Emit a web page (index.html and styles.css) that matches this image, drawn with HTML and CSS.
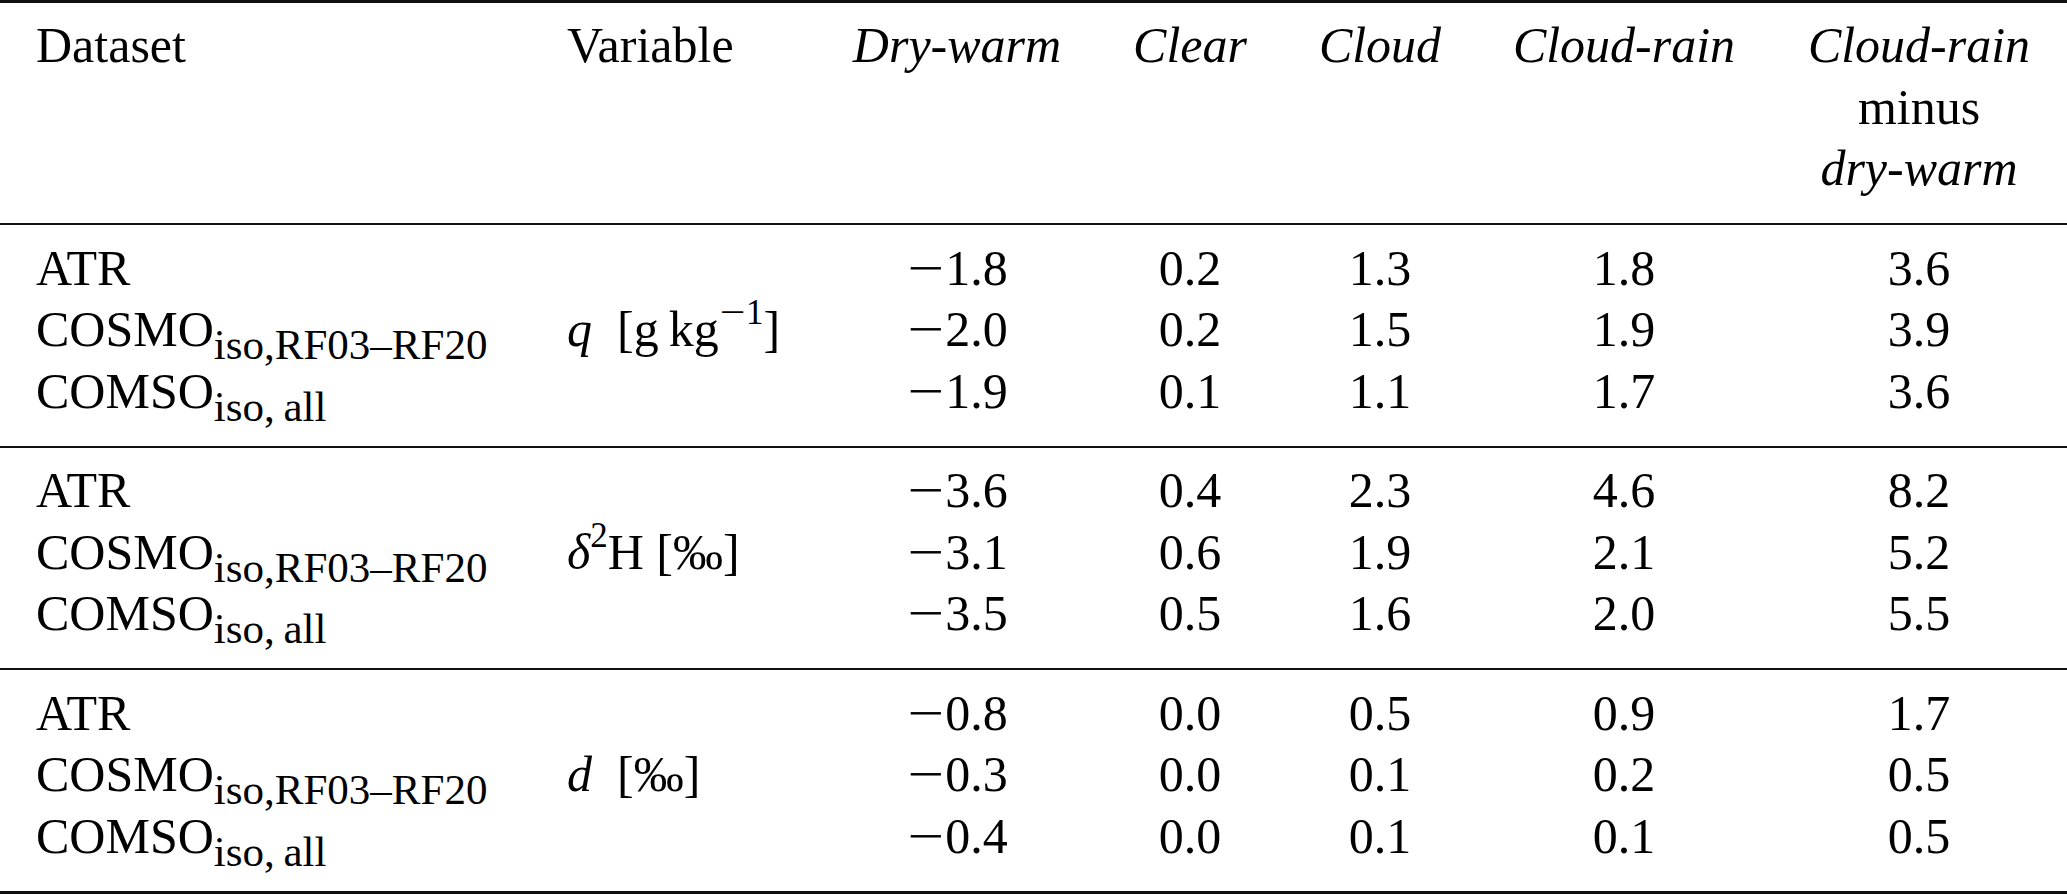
FILE: index.html
```html
<!DOCTYPE html>
<html lang="en">
<head>
<meta charset="utf-8">
<title>Table</title>
<link rel="stylesheet" href="styles.css">
</head>
<body>
<div class="tbl">
  <div class="grp head">
    <div>Dataset</div>
    <div>Variable</div>
    <div class="c it">Dry-warm</div>
    <div class="c it">Clear</div>
    <div class="c it">Cloud</div>
    <div class="c it">Cloud-rain</div>
    <div class="c"><span class="it">Cloud-rain</span><br>minus<br><span class="it">dry-warm</span></div>
  </div>

  <div class="grp">
    <div>ATR</div><div></div>
    <div class="c"><span class="mi">−</span>1.8</div><div class="c">0.2</div><div class="c">1.3</div><div class="c">1.8</div><div class="c">3.6</div>
    <div>COSMO<span class="sb">iso,RF03–RF20</span></div>
    <div><span class="it">q</span>&ensp;[g&thinsp;kg<span class="sp"><span class="mi">−</span>1</span>]</div>
    <div class="c"><span class="mi">−</span>2.0</div><div class="c">0.2</div><div class="c">1.5</div><div class="c">1.9</div><div class="c">3.9</div>
    <div>COMSO<span class="sb">iso,&thinsp;all</span></div><div></div>
    <div class="c"><span class="mi">−</span>1.9</div><div class="c">0.1</div><div class="c">1.1</div><div class="c">1.7</div><div class="c">3.6</div>
  </div>

  <div class="grp">
    <div>ATR</div><div></div>
    <div class="c"><span class="mi">−</span>3.6</div><div class="c">0.4</div><div class="c">2.3</div><div class="c">4.6</div><div class="c">8.2</div>
    <div>COSMO<span class="sb">iso,RF03–RF20</span></div>
    <div><span class="it">δ</span><span class="sp">2</span>H [‰]</div>
    <div class="c"><span class="mi">−</span>3.1</div><div class="c">0.6</div><div class="c">1.9</div><div class="c">2.1</div><div class="c">5.2</div>
    <div>COMSO<span class="sb">iso,&thinsp;all</span></div><div></div>
    <div class="c"><span class="mi">−</span>3.5</div><div class="c">0.5</div><div class="c">1.6</div><div class="c">2.0</div><div class="c">5.5</div>
  </div>

  <div class="grp">
    <div>ATR</div><div></div>
    <div class="c"><span class="mi">−</span>0.8</div><div class="c">0.0</div><div class="c">0.5</div><div class="c">0.9</div><div class="c">1.7</div>
    <div>COSMO<span class="sb">iso,RF03–RF20</span></div>
    <div><span class="it">d</span>&ensp;[‰]</div>
    <div class="c"><span class="mi">−</span>0.3</div><div class="c">0.0</div><div class="c">0.1</div><div class="c">0.2</div><div class="c">0.5</div>
    <div>COMSO<span class="sb">iso,&thinsp;all</span></div><div></div>
    <div class="c"><span class="mi">−</span>0.4</div><div class="c">0.0</div><div class="c">0.1</div><div class="c">0.1</div><div class="c">0.5</div>
  </div>
</div>
</body>
</html>
```

FILE: styles.css
```css
html, body {
  margin: 0;
  padding: 0;
  background: #fff;
}

body {
  font-family: "Liberation Serif", "Times New Roman", serif;
  font-size: 50px;
  color: #000;
  width: 2067px;
}

.tbl {
  width: 2067px;
  border-top: 3px solid #111;
  border-bottom: 3px solid #111;
}

.grp {
  display: grid;
  grid-template-columns: 531px 283px 214px 252px 128px 360px 230px;
  padding: 12.4px 33px 23.6px 36px;
  line-height: 61.5px;
  white-space: nowrap;
}

.grp + .grp {
  border-top: 2px solid #111;
}

.c {
  text-align: center;
}

.it {
  font-style: italic;
}

.mi {
  display: inline-block;
  width: 0.78em;
  text-align: center;
  transform: scaleX(1.3);
  font-style: normal;
}

.sb {
  font-size: 0.86em;
  vertical-align: -13px;
  line-height: 0;
}

.sp {
  font-size: 0.7em;
  vertical-align: 22px;
  line-height: 0;
}
```
